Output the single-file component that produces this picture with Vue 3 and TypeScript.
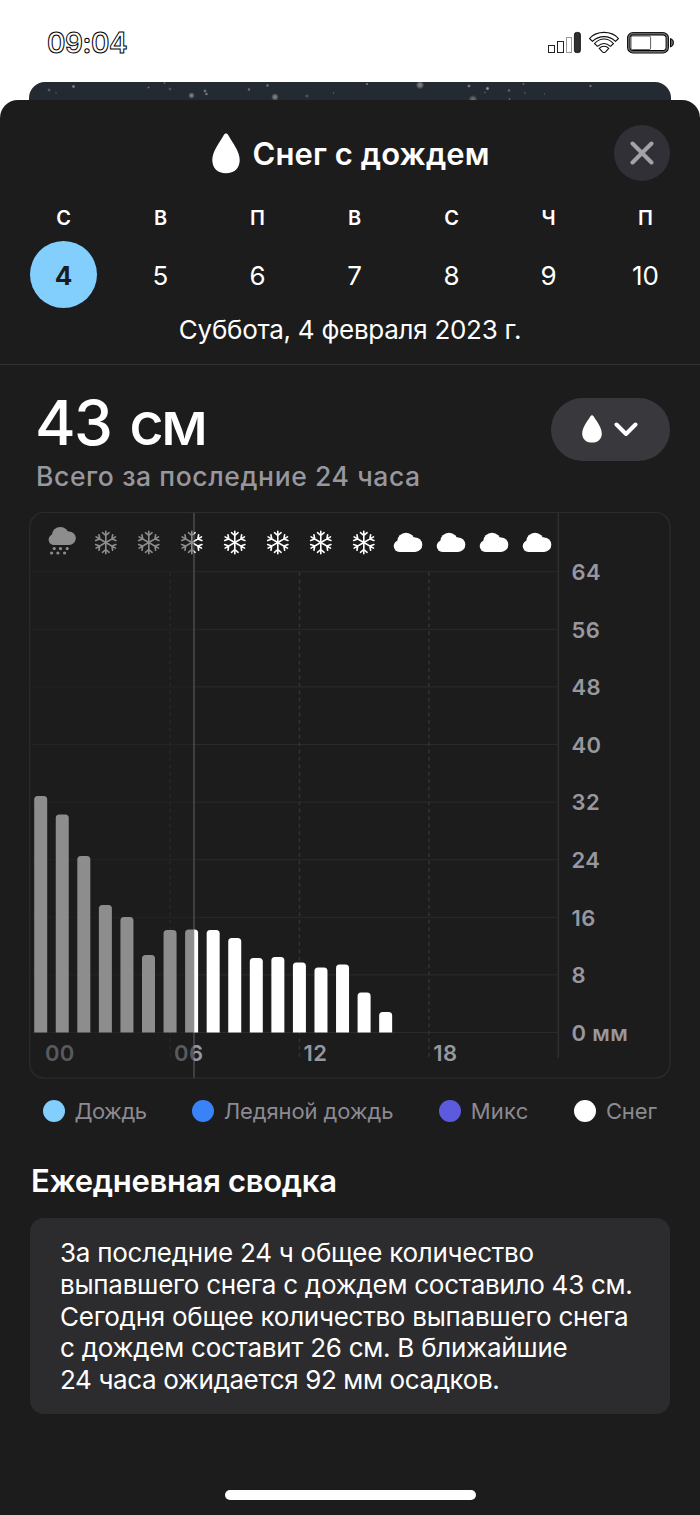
<script setup lang="ts">
interface Day { letter: string; num: number }
interface Flake { x: number; y: number; r: number; o: number }

const days: Day[] = [
  { letter: 'С', num: 4 },
  { letter: 'В', num: 5 },
  { letter: 'П', num: 6 },
  { letter: 'В', num: 7 },
  { letter: 'С', num: 8 },
  { letter: 'Ч', num: 9 },
  { letter: 'П', num: 10 },
]

const flakes: Flake[] = [
  { x: 20, y: 8, r: 1.6, o: 0.3 }, { x: 27, y: 11, r: 1, o: 0.2 }, { x: 44.5, y: 4.5, r: 1.6, o: 0.5 },
  { x: 119.5, y: 5.5, r: 1.2, o: 0.35 }, { x: 135.5, y: 1, r: 1.2, o: 0.3 }, { x: 141, y: 7, r: 1.6, o: 0.25 },
  { x: 162.5, y: 13.5, r: 2.8, o: 0.45 }, { x: 176, y: 9, r: 1.6, o: 0.45 }, { x: 177.5, y: 12, r: 1.5, o: 0.45 },
  { x: 220, y: 7.5, r: 1.5, o: 0.4 }, { x: 238.5, y: 3.5, r: 1.5, o: 0.4 }, { x: 246, y: 15, r: 3.2, o: 0.45 },
  { x: 278, y: 14, r: 1.7, o: 0.25 }, { x: 304.5, y: 11, r: 1, o: 0.3 }, { x: 338, y: 2, r: 1.4, o: 0.4 },
  { x: 391, y: 3, r: 3.6, o: 0.45 }, { x: 440, y: 4, r: 1.6, o: 0.5 }, { x: 444, y: 17.5, r: 3.8, o: 0.35 },
  { x: 458.5, y: 6.5, r: 1.8, o: 0.55 }, { x: 456, y: 10.5, r: 1, o: 0.3 }, { x: 480, y: 8.5, r: 1.5, o: 0.35 },
  { x: 480.5, y: 17, r: 1.1, o: 0.35 }, { x: 494.5, y: 2, r: 1.3, o: 0.3 }, { x: 496, y: 11, r: 1, o: 0.25 },
  { x: 515.5, y: 12, r: 1, o: 0.2 }, { x: 561.5, y: 4, r: 1.4, o: 0.4 },
]

// Chart geometry: the plot spans one day, 8 mm per horizontal grid step.
const baseY = 520.5
const stepY = 57.6
const ticks = [0, 8, 16, 24, 32, 40, 48, 56, 64].map((v) => ({
  y: baseY - (v / 8) * stepY,
  label: v === 0 ? '0 мм' : String(v),
}))

const barHeights = [236.5, 218, 176.5, 127.5, 115.5, 77.5, 102.5, 103, 102.5, 94.5, 74.5, 75.5, 70, 65, 68, 40, 20.5]
const bars = barHeights.map((h, i) => {
  const x = 4.2 + i * 21.56
  const top = baseY - h
  return `M${x} ${baseY}V${top + 3.5}q0 -3.5 3.5 -3.5h6q3.5 0 3.5 3.5V${baseY}z`
})

const hours = [
  { x: 14.9, label: '00' },
  { x: 144, label: '06' },
  { x: 273.6, label: '12' },
  { x: 403.2, label: '18' },
]
const dashes = [140.2, 269.5, 399]
const snow = [0, 1, 2, 3, 4, 5, 6].map((i) => 75.8 + i * 43)
const clouds = [0, 1, 2, 3].map((i) => 378 + i * 43)
const drops = [[-8, 12.6], [-1.7, 12.6], [5, 12.6], [-10.6, 17], [-4.3, 17], [2.4, 17]]

const legend = [
  { name: 'Дождь', cls: 'rain' },
  { name: 'Ледяной дождь', cls: 'ice' },
  { name: 'Микс', cls: 'mix' },
  { name: 'Снег', cls: 'snow' },
]

const summary = [
  'За последние 24 ч общее количество',
  'выпавшего снега с дождем составило 43 см.',
  'Сегодня общее количество выпавшего снега',
  'с дождем составит 26 см. В ближайшие',
  '24 часа ожидается 92 мм осадков.',
]
</script>

<template>
  <div class="screen">
    <div class="status">
      <span class="clock">09:04</span>
      <svg class="status-icons" width="128" height="24" viewBox="0 0 128 24">
        <g fill="#fff" stroke="#222" stroke-width="1">
          <rect x="2.500" y="14.500" width="6" height="7" />
          <rect x="11.500" y="10.500" width="6" height="11" />
          <rect x="20.500" y="6.500" width="5" height="15" stroke="#999" />
        </g>
        <rect x="28.400" y="1.400" width="6" height="20.200" rx="2.200" fill="#2f2f2f" stroke="#000" stroke-width=".8" />
        <g fill="#fff" stroke="#111" stroke-width="1.100" stroke-linejoin="round">
          <path d="M43.500 7.500C51 -.7 65 -.7 72.500 7.500L69.500 10.300C63 4 53 4 46.500 10.300Z" />
          <path d="M48.500 12.500C54 6.500 62 6.500 67.500 12.500L64.500 15.300C60.500 11.800 55.500 11.800 51.500 15.300Z" />
          <path d="M53.200 17.300C56 14.600 60 14.600 62.800 17.300L59.500 20.800Q58 22.200 56.500 20.800Z" />
        </g>
        <rect x="82.700" y="2.700" width="38.600" height="18.100" rx="4.500" fill="#fff" stroke="#000" stroke-width="3.400" />
        <rect x="82.700" y="2.700" width="38.600" height="18.100" rx="4.500" fill="none" stroke="#666" stroke-width="1.800" />
        <rect x="85" y="5" width="19.600" height="13.600" rx="1.500" fill="#fff" stroke="#333" stroke-width=".8" />
        <path d="M124.500 7.500V16Q127.500 15 127.500 11.700T124.500 7.500Z" fill="#666" stroke="#000" />
      </svg>
    </div>

    <div class="backdrop">
      <svg width="641" height="30" viewBox="0 0 641 30">
        <defs>
          <radialGradient id="flake">
            <stop offset="0" stop-color="#fff" />
            <stop offset=".45" stop-color="#fff" stop-opacity=".7" />
            <stop offset="1" stop-color="#fff" stop-opacity="0" />
          </radialGradient>
        </defs>
        <circle v-for="(f, i) in flakes" :key="i" :cx="f.x" :cy="f.y" :r="f.r * 1.2" :opacity="f.o" fill="url(#flake)" />
      </svg>
    </div>

    <main class="sheet">
      <header class="title-row">
        <div class="side"></div>
        <div class="title">
          <svg width="28" height="41" viewBox="0 0 28 41">
            <path d="M14 .5C13 .5 12.400 1 11.800 2C7.500 9.500 .3 18.500 .3 27C.3 35 5.500 40.300 14 40.300S27.700 35 27.700 27C27.700 18.500 20.500 9.500 16.200 2C15.600 1 15 .5 14 .5Z" fill="#fff" />
          </svg>
          <h1>Снег с дождем</h1>
        </div>
        <div class="side">
          <button class="close" aria-label="Закрыть">
            <svg width="24" height="24" viewBox="0 0 24 24">
              <path d="M2.500 2.500L21.500 21.500M21.500 2.500L2.500 21.500" stroke="#a3a2aa" stroke-width="4" stroke-linecap="round" />
            </svg>
          </button>
        </div>
      </header>

      <div class="week">
        <div v-for="(d, i) in days" :key="i" class="day" :class="{ active: i === 0 }">
          <span class="letter">{{ d.letter }}</span>
          <span class="num">{{ d.num }}</span>
        </div>
      </div>
      <p class="date">Суббота, 4 февраля 2023 г.</p>

      <section class="total">
        <div>
          <p class="value">43 <span class="unit">см</span></p>
          <p class="caption">Всего за последние 24 часа</p>
        </div>
        <button class="picker" aria-label="Осадки">
          <svg width="20" height="28" viewBox="0 0 28 41" preserveAspectRatio="none">
            <path d="M14 .5C13 .5 12.400 1 11.800 2C7.500 9.500 .3 18.500 .3 27C.3 35 5.500 40.300 14 40.300S27.700 35 27.700 27C27.700 18.500 20.500 9.500 16.200 2C15.600 1 15 .5 14 .5Z" fill="#fff" />
          </svg>
          <svg width="24" height="15" viewBox="0 0 24 15">
            <path d="M2.500 2.500L12 12L21.500 2.500" fill="none" stroke="#fff" stroke-width="4" stroke-linecap="round" stroke-linejoin="round" />
          </svg>
        </button>
      </section>

      <svg class="chart" width="641" height="567" viewBox="0 0 641 567">
        <defs>
          <g id="snowflake" fill="none" stroke="#fff" stroke-width="1.600" stroke-linecap="round">
            <path v-for="a in [0, 60, 120, 180, 240, 300]" :key="a" :transform="`rotate(${a})`" d="M0 0V-11.200M-3.300 -9.800L0 -7L3.300 -9.800" />
          </g>
          <g id="cloud">
            <circle cx="-2" cy="-.8" r="8.800" />
            <circle cx="7.100" cy="2.400" r="7.200" />
            <circle cx="-8.500" cy="3.800" r="5.800" />
            <path d="M-8.500 9.600V-2L-6 -5L7 -4.800V9.600Z" />
          </g>
        </defs>

        <g stroke="#2b2b2d" stroke-width="1">
          <line v-for="t in ticks" :key="t.y" x1="0" x2="528" :y1="t.y" :y2="t.y" />
        </g>
        <g stroke="#323234" stroke-width="1.500" stroke-dasharray="3.800 3.600">
          <line v-for="x in dashes" :key="x" :x1="x" :x2="x" y1="60" y2="547" />
        </g>
        <line x1="528.300" x2="528.300" y1="1" y2="546" stroke="#323234" stroke-width="1.300" />

        <g class="axis-text">
          <text v-for="t in ticks" :key="t.label" x="541.500" :y="t.y + 8.200">{{ t.label }}</text>
          <text v-for="h in hours" :key="h.label" :x="h.x" y="548.700">{{ h.label }}</text>
        </g>

        <path v-for="(d, i) in bars" :key="i" :d="d" fill="#fff" />

        <g transform="translate(32.200 24)" fill="#fff">
          <use href="#cloud" transform="scale(.95)" />
          <circle v-for="p in drops" :key="p.join()" :cx="p[0]" :cy="p[1]" r="1.600" />
        </g>
        <use v-for="x in snow" :key="x" href="#snowflake" :x="x" y="30.500" />
        <use v-for="x in clouds" :key="x" href="#cloud" :x="x" y="30.300" fill="#fff" />

        <rect x="0" y="1" width="164" height="565" rx="14" fill="#1c1c1c" opacity=".5" />
        <line x1="164" x2="164" y1="0" y2="566.500" stroke="#98979f" stroke-opacity=".33" stroke-width="1.800" />
        <rect x="-.3" y=".5" width="640.300" height="565.500" rx="14.500" fill="none" stroke="#2c2c2f" stroke-width="1.200" />
      </svg>

      <ul class="legend">
        <li v-for="l in legend" :key="l.cls" :class="`item-${l.cls}`"><i :class="l.cls"></i><span>{{ l.name }}</span></li>
      </ul>

      <h2>Ежедневная сводка</h2>
      <div class="card">
        <p v-for="(line, i) in summary" :key="i">{{ line }}</p>
      </div>
      <div class="home"></div>
    </main>
  </div>
</template>

<style>
body {
  margin: 0;
  background: #fff;
}
</style>

<style scoped>
.screen {
  width: 700px;
  height: 1515px;
  overflow: hidden;
  background: #fff;
  color: #fff;
  font-family: Inter, "Liberation Sans", sans-serif;
  display: flex;
  flex-direction: column;
}
p, h1, h2, ul {
  margin: 0;
  padding: 0;
}
button {
  border: 0;
  padding: 0;
  display: flex;
  align-items: center;
  justify-content: center;
}
svg {
  display: block;
}
.status {
  height: 82px;
  flex: none;
  box-sizing: border-box;
  padding: 31px 26px 0 47px;
  display: flex;
  justify-content: space-between;
}
.clock {
  font-size: 28px;
  line-height: 25px;
  font-weight: 600;
  letter-spacing: -0.45px;
  color: #fff;
  -webkit-text-stroke: 1px #000;
}
.backdrop {
  flex: none;
  width: 642px;
  height: 30px;
  margin: 0 0 -12px 29px;
  border-radius: 16px 16px 0 0;
  background: #232a31;
  overflow: hidden;
}
.sheet {
  position: relative;
  flex: 1;
  background: #1c1c1c;
  border-radius: 18px 18px 0 0;
  display: flex;
  flex-direction: column;
}
.title-row {
  display: flex;
  justify-content: space-between;
  padding: 25px 30px 0;
  height: 56px;
  flex: none;
}
.side {
  width: 56px;
}
.close {
  width: 56px;
  height: 56px;
  border-radius: 50%;
  background: #313036;
}
.title {
  display: flex;
  align-items: center;
  gap: 12px;
  margin-left: 2px;
}
h1 {
  font-size: 31px;
  line-height: 40px;
  font-weight: 600;
  letter-spacing: 0.1px;
  padding-top: 2px;
}
.week {
  display: flex;
  padding-left: 15px;
  margin-top: 25px;
}
.day {
  width: 97px;
  display: flex;
  flex-direction: column;
  align-items: center;
}
.letter {
  font-size: 20px;
  line-height: 24px;
  font-weight: 600;
  margin-bottom: 11.4px;
}
.num {
  width: 67px;
  height: 67px;
  border-radius: 50%;
  font-size: 26px;
  line-height: 69px;
  text-align: center;
}
.active .num {
  background: #82cffd;
  color: #1c1c1c;
  font-weight: 700;
}
.date {
  height: 56.600px;
  line-height: 43px;
  font-size: 26px;
  letter-spacing: -0.28px;
  text-align: center;
  border-bottom: 1px solid #323234;
  box-sizing: border-box;
}
.total {
  display: flex;
  justify-content: space-between;
  align-items: flex-start;
  padding: 33px 30px 0 36px;
  height: 114px;
}
.value {
  font-size: 62px;
  line-height: 50px;
  height: 50px;
  font-weight: 500;
  letter-spacing: -1.6px;
  margin-left: -1px;
}
.unit {
  font-size: 60px;
  letter-spacing: -3px;
  margin-left: 3px;
}
.caption {
  font-size: 26.500px;
  line-height: 32px;
  font-weight: 500;
  letter-spacing: 0.6px;
  margin-top: 12.500px;
  color: #98979f;
}
.picker {
  width: 119px;
  height: 63px;
  border-radius: 32px;
  background: #39383d;
  gap: 12px;
  box-sizing: border-box;
  padding-right: 2px;
}
.chart {
  margin-left: 30px;
  flex: none;
  overflow: visible;
}
.axis-text {
  font-size: 22px;
  font-weight: 600;
  letter-spacing: 0.4px;
  fill: #98979f;
}
.legend {
  list-style: none;
  display: flex;
  justify-content: space-between;
  padding: 19px 43px 0 43px;
}
.legend li {
  display: flex;
  align-items: center;
  gap: 9.500px;
  font-size: 22px;
  line-height: 26px;
  letter-spacing: -0.1px;
  color: #8b8a92;
}
.legend .item-rain {
  letter-spacing: -0.55px;
}
.legend .item-mix {
  letter-spacing: 0.25px;
}
.legend i {
  width: 22px;
  height: 22px;
  border-radius: 50%;
}
.rain { background: #82cffd; }
.ice { background: #3a82f7; }
.mix { background: #5d5bdd; }
.snow { background: #fff; }
h2 {
  font-size: 31px;
  line-height: 40px;
  font-weight: 600;
  letter-spacing: -0.3px;
  margin: 37px 0 0 31px;
}
.card {
  margin: 17px 30px 0;
  height: 196px;
  box-sizing: border-box;
  padding: 19px 30px 0;
  border-radius: 14px;
  background: #2c2c2e;
}
.card p {
  font-size: 26px;
  line-height: 31.8px;
  letter-spacing: -0.26px;
  white-space: nowrap;
}
.card p:last-child {
  letter-spacing: -0.38px;
}
.home {
  width: 251px;
  height: 10px;
  border-radius: 5px;
  background: #fff;
  margin: auto auto 15px;
}
</style>
